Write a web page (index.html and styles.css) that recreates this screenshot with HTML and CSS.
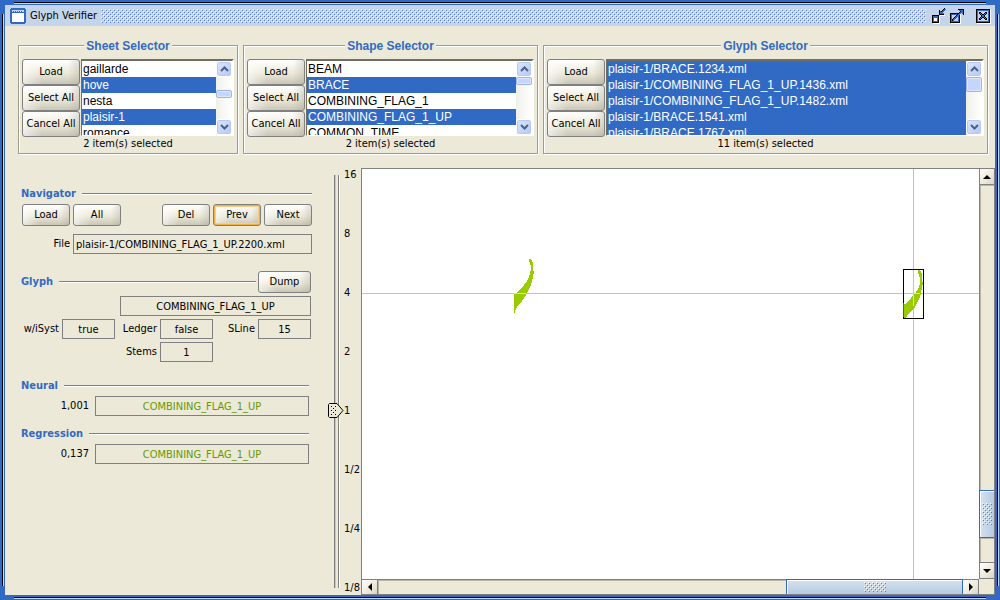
FILE: index.html
```html
<!DOCTYPE html>
<html lang="en">
<head>
<meta charset="utf-8">
<title>Glyph Verifier</title>
<link rel="stylesheet" href="styles.css">
</head>
<body>
<div class="window">
  <header class="titlebar">
    <svg class="app-icon" width="16" height="16" viewBox="0 0 16 16" shape-rendering="crispEdges" aria-hidden="true">
      <path fill="#316ac5" d="M1 0h14v1h1v14h-1v1H1v-1H0V1h1z"/>
      <path fill="#c4d5eb" d="M2 2h12v2H2z"/>
      <path fill="#fff" d="M2 5h12v9H2z"/>
      <path fill="#316ac5" d="M3 3h1v1H3zM5 3h1v1H5zM7 3h1v1H7zM9 3h1v1H9zM11 3h1v1h-1z"/>
    </svg>
    <h1 class="window-title">Glyph Verifier</h1>
    <div class="bumps titlebar-bumps"></div>
    <div class="window-buttons">
      <button class="icon-button" type="button" aria-label="Minimize">
        <svg width="16" height="16" viewBox="0 0 16 16" shape-rendering="crispEdges">
          <path fill="#fff" d="M2 8h7v8H2zM9 7h5v1H9z"/>
          <path fill="#000" d="M1 7h7v8H1z"/>
          <path fill="#316ac5" d="M2 8h5v6H2z"/>
          <path fill="#fff" d="M3 10h3v3H3z"/>
          <path fill="#000" d="M8 2h1v4h4v1H8zM13 0h1v1h-1zM12 1h1v1h-1zM11 2h1v1h-1zM10 3h1v1h-1z"/>
          <path fill="#316ac5" d="M13 1h2v1h-1v1h-1v1h-1v1h1v1H9V3h1v1h1V3h1V2h1z"/>
        </svg>
      </button>
      <button class="icon-button" type="button" aria-label="Maximize">
        <svg width="16" height="16" viewBox="0 0 16 16" shape-rendering="crispEdges">
          <path fill="#fff" d="M2 6h10v10H2z"/>
          <path fill="#000" d="M1 5h10v10H1z"/>
          <path fill="#316ac5" d="M2 6h8v8H2z"/>
          <path fill="#c4d5eb" d="M3 7h6v6H3z"/>
          <path fill="#000" d="M9 1h6v6h-1V2H9zM3 11h1v-1h1V9h1V8h1V7h1V6h1V5h1V4h1V3h1v2h-1v1h-1v1H9v1H8v1H7v1H6v1H5v1H4v1H3z"/>
          <path fill="#316ac5" d="M10 2h4v4h-1V5h-1v1h-1v1h-1v1H9v1H8v1H7v1H6v1H5v1H4v-2h1v-1h1V9h1V8h1V7h1V6h1V5h1V4h1V3h-2z"/>
        </svg>
      </button>
      <button class="icon-button close-button" type="button" aria-label="Close">
        <svg width="16" height="16" viewBox="0 0 16 16" shape-rendering="crispEdges">
          <path fill="#fff" d="M2 2h14v14H2z"/>
          <path fill="#000" d="M1 1h14v14H1z"/>
          <path fill="#316ac5" d="M2 2h12v12H2z"/>
          <path fill="#c4d5eb" d="M3 3h10v10H3z"/>
          <path fill="#000" d="M4 4h2v1h1v1h2V5h1V4h2v2h-1v1h-1v2h1v1h1v2h-2v-1H9v-1H7v1H6v1H4v-2h1V9h1V7H5V6H4z"/>
          <path fill="#316ac5" d="M5 5h1v1h1v1h2V6h1V5h1v1h-1v1H9v2h1v1h1v1h-1v-1H9V9H7v1H6v1H5v-1h1V9h1V7H6V6H5z"/>
        </svg>
      </button>
    </div>
  </header>

  <main class="content">
    <div class="selectors">
      <section class="selector">
        <h2 class="selector-title">Sheet Selector</h2>
        <div class="selector-body">
          <div class="selector-actions">
            <button class="button" type="button">Load</button>
            <button class="button" type="button">Select All</button>
            <button class="button" type="button">Cancel All</button>
          </div>
          <div class="list-frame">
            <select class="list" multiple aria-label="Sheets">
              <option>gaillarde</option>
              <option selected>hove</option>
              <option>nesta</option>
              <option selected>plaisir-1</option>
              <option>romance</option>
            </select>
            <div class="list-scroll">
              <button class="list-arrow" type="button" aria-label="Scroll up"><svg width="9" height="6" viewBox="0 0 9 6"><path d="M1 5l3.500-3.500L8 5" fill="none" stroke="#4d6185" stroke-width="2"/></svg></button>
              <span class="space-before"></span>
              <span class="list-thumb"></span>
              <span class="space-after"></span>
              <button class="list-arrow" type="button" aria-label="Scroll down"><svg width="9" height="6" viewBox="0 0 9 6"><path d="M1 1l3.500 3.500L8 1" fill="none" stroke="#4d6185" stroke-width="2"/></svg></button>
            </div>
          </div>
        </div>
        <p class="status">2 item(s) selected</p>
      </section>

      <section class="selector">
        <h2 class="selector-title">Shape Selector</h2>
        <div class="selector-body">
          <div class="selector-actions">
            <button class="button" type="button">Load</button>
            <button class="button" type="button">Select All</button>
            <button class="button" type="button">Cancel All</button>
          </div>
          <div class="list-frame">
            <select class="list" multiple aria-label="Shapes">
              <option>BEAM</option>
              <option selected>BRACE</option>
              <option>COMBINING_FLAG_1</option>
              <option selected>COMBINING_FLAG_1_UP</option>
              <option>COMMON_TIME</option>
            </select>
            <div class="list-scroll">
              <button class="list-arrow" type="button" aria-label="Scroll up"><svg width="9" height="6" viewBox="0 0 9 6"><path d="M1 5l3.500-3.500L8 5" fill="none" stroke="#4d6185" stroke-width="2"/></svg></button>
              <span class="list-thumb"></span>
              <span class="space-after"></span>
              <button class="list-arrow" type="button" aria-label="Scroll down"><svg width="9" height="6" viewBox="0 0 9 6"><path d="M1 1l3.500 3.500L8 1" fill="none" stroke="#4d6185" stroke-width="2"/></svg></button>
            </div>
          </div>
        </div>
        <p class="status">2 item(s) selected</p>
      </section>

      <section class="selector">
        <h2 class="selector-title">Glyph Selector</h2>
        <div class="selector-body">
          <div class="selector-actions">
            <button class="button" type="button">Load</button>
            <button class="button" type="button">Select All</button>
            <button class="button" type="button">Cancel All</button>
          </div>
          <div class="list-frame">
            <select class="list" multiple aria-label="Glyphs">
              <option selected>plaisir-1/BRACE.1234.xml</option>
              <option selected>plaisir-1/COMBINING_FLAG_1_UP.1436.xml</option>
              <option selected>plaisir-1/COMBINING_FLAG_1_UP.1482.xml</option>
              <option selected>plaisir-1/BRACE.1541.xml</option>
              <option selected>plaisir-1/BRACE.1767.xml</option>
            </select>
            <div class="list-scroll">
              <button class="list-arrow" type="button" aria-label="Scroll up"><svg width="9" height="6" viewBox="0 0 9 6"><path d="M1 5l3.500-3.500L8 5" fill="none" stroke="#4d6185" stroke-width="2"/></svg></button>
              <span class="list-thumb tall"></span>
              <span class="space-after"></span>
              <button class="list-arrow" type="button" aria-label="Scroll down"><svg width="9" height="6" viewBox="0 0 9 6"><path d="M1 1l3.500 3.500L8 1" fill="none" stroke="#4d6185" stroke-width="2"/></svg></button>
            </div>
          </div>
        </div>
        <p class="status">11 item(s) selected</p>
      </section>
    </div>

    <div class="workspace">
      <div class="boards">
        <section class="board">
          <div class="board-head"><h2 class="board-title">Navigator</h2><span class="rule"></span></div>
          <div class="nav-buttons">
            <button class="button small" type="button">Load</button>
            <button class="button small" type="button">All</button>
            <span class="spacer"></span>
            <button class="button small" type="button">Del</button>
            <button class="button small focused" type="button">Prev</button>
            <button class="button small" type="button">Next</button>
          </div>
          <div class="file-row">
            <label for="file">File</label>
            <input class="field left" id="file" type="text" readonly value="plaisir-1/COMBINING_FLAG_1_UP.2200.xml">
          </div>
        </section>

        <section class="board glyph-board">
          <div class="board-head"><h2 class="board-title">Glyph</h2><span class="rule"></span><button class="button dump" type="button">Dump</button></div>
          <div class="glyph-grid">
            <div class="shape-cell"><input class="field" type="text" readonly aria-label="Shape" value="COMBINING_FLAG_1_UP"></div>
            <label for="syst">w/iSyst</label><input class="field" id="syst" type="text" readonly value="true">
            <label for="ledger">Ledger</label><input class="field" id="ledger" type="text" readonly value="false">
            <label for="sline">SLine</label><input class="field" id="sline" type="text" readonly value="15">
            <label class="stems-label" for="stems">Stems</label><input class="field" id="stems" type="text" readonly value="1">
          </div>
        </section>

        <section class="board result-board">
          <div class="board-head"><h2 class="board-title">Neural</h2><span class="rule"></span></div>
          <div class="result-row">
            <label for="neural">1,001</label>
            <input class="field result" id="neural" type="text" readonly value="COMBINING_FLAG_1_UP">
          </div>
        </section>

        <section class="board result-board">
          <div class="board-head"><h2 class="board-title">Regression</h2><span class="rule"></span></div>
          <div class="result-row">
            <label for="regression">0,137</label>
            <input class="field result" id="regression" type="text" readonly value="COMBINING_FLAG_1_UP">
          </div>
        </section>
      </div>

      <div class="zoom">
        <input class="zoom-slider" type="range" min="-3" max="4" value="0" aria-label="Zoom">
        <ol class="zoom-labels">
          <li>16</li><li>8</li><li>4</li><li>2</li><li>1</li><li>1/2</li><li>1/4</li><li>1/8</li>
        </ol>
      </div>

      <div class="viewer">
        <svg class="sheet" shape-rendering="crispEdges" role="img" aria-label="Glyph view">
          <path d="M0 124.500H2000M551.500 0V2000" stroke="#ffc800" fill="none"/>
          <path fill="#99cc00" d="M167 90h2v1h1v2h1v9h1v3h-1v5h-1v4h-1v3h-1v2h-1v2h-1v2h-1v2h-1v2h-1v1h-1v2h-1v1h-1v2h-1v1h-1v1h-1v1h-1v1h-1v2h-1v2h-1v3h-1v-19h1v-1h2v-1h1v-1h1v-1h1v-1h1v-1h1v-1h1v-1h1v-2h1v-1h1v-1h1v-2h1v-2h1v-3h1v-4h1v-6h-1z"/>
          <path fill="#99cc00" d="M556 101h2v1h1v2h1v9h1v3h-1v5h-1v5h-1v3h-1v2h-1v2h-1v2h-1v2h-1v2h-1v1h-1v1h-1v1h-1v1h-1v1h-1v1h-1v1h-1v2h-1v1h-1v1h-2v-14h1v-1h2v-1h1v-1h1v-1h1v-1h1v-1h1v-2h1v-1h1v-1h1v-1h1v-1h1v-2h1v-1h1v-2h1v-3h1v-8h-1z"/>
          <path d="M152 124.500h12M552 124.500h6M551.500 126v11" stroke="#99ffcc" fill="none"/>
          <path d="M541.500 100.500h20v49h-20z" stroke="#000" fill="none"/>
          <path d="M541.500 134v14" stroke="#6633ff" fill="none"/>
        </svg>
        <div class="bar vertical">
          <button class="bar-arrow" type="button" aria-label="Scroll up"><svg width="8" height="4" viewBox="0 0 8 4"><path d="M0 4L4 0l4 4z"/></svg></button>
          <span class="track before"></span>
          <span class="bar-thumb"><span class="bumps"></span></span>
          <span class="track after"></span>
          <button class="bar-arrow" type="button" aria-label="Scroll down"><svg width="8" height="4" viewBox="0 0 8 4"><path d="M0 0l4 4 4-4z"/></svg></button>
        </div>
        <div class="bar horizontal">
          <button class="bar-arrow" type="button" aria-label="Scroll left"><svg width="4" height="8" viewBox="0 0 4 8"><path d="M4 0L0 4l4 4z"/></svg></button>
          <span class="track before"></span>
          <span class="bar-thumb"><span class="bumps"></span></span>
          <button class="bar-arrow" type="button" aria-label="Scroll right"><svg width="4" height="8" viewBox="0 0 4 8"><path d="M0 0l4 4-4 4z"/></svg></button>
        </div>
        <div class="corner"></div>
      </div>
    </div>
  </main>
</div>
</body>
</html>
```

FILE: styles.css
```css
:root {
  --blue: #316ac5;
  --light-blue: #c4d5eb;
  --face: #ece9d8;
  --gray: #808080;
  --etch: #9d9d8c;
}

* {
  box-sizing: border-box;
}

body {
  margin: 0;
  background: var(--blue);
  color: #000;
  font: 11px/14px "DejaVu Sans Condensed", "DejaVu Sans", sans-serif;
}

h1, h2, p, ol {
  margin: 0;
  padding: 0;
}

button, input, select {
  font: inherit;
  color: inherit;
  border-radius: 0;
}

/* Window frame: blue edge with a black and light hairline on each side */
.window {
  display: flex;
  flex-direction: column;
  height: 100vh;
  min-height: 500px;
  padding: 5px;
  background:
    linear-gradient(#000, #000) center 2px / calc(100% - 28px) 1px no-repeat,
    linear-gradient(var(--light-blue), var(--light-blue)) center 3px / calc(100% - 28px) 1px no-repeat,
    linear-gradient(#000, #000) center bottom 2px / calc(100% - 28px) 1px no-repeat,
    linear-gradient(var(--light-blue), var(--light-blue)) center bottom 1px / calc(100% - 28px) 1px no-repeat,
    linear-gradient(#000, #000) 2px center / 1px calc(100% - 28px) no-repeat,
    linear-gradient(var(--light-blue), var(--light-blue)) 3px center / 1px calc(100% - 28px) no-repeat,
    linear-gradient(#000, #000) right 2px center / 1px calc(100% - 28px) no-repeat,
    linear-gradient(var(--light-blue), var(--light-blue)) right 1px center / 1px calc(100% - 28px) no-repeat,
    var(--blue);
}

.titlebar {
  display: flex;
  flex: none;
  align-items: center;
  height: 21px;
  padding: 0 4px 0 5px;
  background: var(--light-blue);
}

.window-title {
  margin: 0 4px;
  font-size: 11px;
  font-weight: normal;
}

.bumps {
  background: url("data:image/svg+xml,%3Csvg xmlns='http://www.w3.org/2000/svg' width='4' height='4' shape-rendering='crispEdges'%3E%3Cpath fill='%23fff' d='M0 0h1v1H0zM2 2h1v1H2z'/%3E%3Cpath fill='%235b80bb' d='M1 1h1v1H1zM3 3h1v1H3z'/%3E%3C/svg%3E");
}

.titlebar-bumps {
  flex: 1;
  height: 14px;
}

.window-buttons {
  display: flex;
  gap: 2px;
  margin-left: 5px;
}

.icon-button {
  display: flex;
  padding: 0;
  border: 0;
  background: none;
}

.close-button {
  margin-left: 8px;
}

.content {
  display: flex;
  flex: 1;
  flex-direction: column;
  gap: 14px;
  min-height: 0;
  padding-top: 19px;
  background: var(--face);
}

/* Selector panels */
.selectors {
  display: grid;
  flex: none;
  grid-template-columns: 220fr 295fr 445fr;
  gap: 5px;
  padding: 0 7px 0 13px;
}

.selector {
  min-width: 0;
  padding: 0 3px 2px;
  border: 1px solid var(--etch);
  box-shadow: 1px 1px 0 #fff, inset 1px 1px 0 #fff;
  text-align: center;
}

.selector-title {
  width: fit-content;
  margin: -7px auto 6px;
  padding: 0 2px;
  background: var(--face);
  color: var(--blue);
  font: bold 12px/14px "Liberation Sans", Arial, sans-serif;
}

.selector-body {
  display: flex;
  gap: 1px;
}

.selector-actions {
  flex: none;
  width: 58px;
}

.selector-actions .button {
  display: block;
  width: 100%;
  height: 26px;
}

.button {
  flex: none;
  padding: 0;
  border: 1px solid var(--gray);
  border-radius: 3px;
  background: linear-gradient(90deg, #fff9 0, #fff0 35%, #fff0 80%, #a8a59855 100%),
    linear-gradient(#fff 0, #ece9d8 55%, #c9c6b8 100%);
  white-space: nowrap;
}

.small {
  width: 48px;
  height: 22px;
}

.focused {
  box-shadow: inset 0 0 0 1px #f0b040, inset 0 0 0 2px #f8cf80;
}

.list-frame {
  display: flex;
  flex: 1;
  min-width: 0;
  height: 77px;
  border: 1px solid;
  border-width: 2px 2px 1px 1px;
  border-color: #716f64 #fff #fff #716f64;
  background: #fff;
}

.list {
  flex: 1;
  min-width: 0;
  height: 74px;
  padding: 0;
  overflow: hidden;
  border: 0;
  outline: 0;
  background: #fff;
  font: 12px/16px "Liberation Sans", Arial, sans-serif;
  scrollbar-width: none;
}

.list option {
  height: 16px;
  min-height: 16px;
  padding: 1px 1px 0;
  line-height: 16px;
}

.list option:checked {
  background: linear-gradient(var(--blue), var(--blue));
  -webkit-text-fill-color: #fff;
}

.list-scroll {
  display: flex;
  flex: none;
  flex-direction: column;
  width: 16px;
  background: linear-gradient(90deg, #f0f0ea, #fff);
}

.list-arrow {
  display: flex;
  flex: none;
  align-items: center;
  justify-content: center;
  height: 16px;
  padding: 0;
  border: 1px solid #fff;
  border-radius: 3px;
  background: linear-gradient(135deg, #dbe6ff, #b4c8f6);
  box-shadow: inset 0 0 0 1px #b8c9f0;
}

.list-thumb {
  flex: none;
  height: 8px;
  border: 1px solid #9fb5e3;
  border-radius: 2px;
  background: #c6d5fb;
  box-shadow: inset 0 0 0 1px #dbe6ff;
}

.tall {
  height: 15px;
}

.space-before {
  flex: 13;
}

.space-after {
  flex: 20;
}

/* Lower area */
.workspace {
  display: grid;
  flex: 1;
  grid-template-rows: minmax(0, 1fr);
  grid-template-columns: 291px 27px minmax(0, 1fr);
  column-gap: 17px;
  min-height: 0;
  padding-left: 16px;
}

.boards {
  padding-top: 18px;
}

.board {
  margin-bottom: 17px;
}

.board-head {
  display: flex;
  align-items: center;
}

.board-title {
  color: var(--blue);
  font-size: 11px;
  line-height: 16px;
}

.rule {
  flex: 1;
  height: 2px;
  margin-left: 6px;
  border-top: 1px solid var(--gray);
  background: #fff;
}

.nav-buttons {
  display: flex;
  gap: 3px;
  margin: 2px 0 8px;
  padding-left: 1px;
}

.spacer {
  flex: 1;
}

.file-row {
  display: grid;
  grid-template-columns: 49px 1fr;
  gap: 3px;
  align-items: center;
  text-align: right;
}

.field {
  display: block;
  width: 100%;
  min-width: 0;
  height: 20px;
  padding: 0 2px;
  border: 1px solid var(--gray);
  background: var(--face);
  text-align: center;
}

.left {
  text-align: left;
}

.glyph-board {
  margin-bottom: 16px;
  padding-right: 1px;
}

.dump {
  width: 53px;
  height: 22px;
  margin-left: 2px;
}

.glyph-grid {
  display: grid;
  grid-template-columns: 38px 53px 39px 53px 39px 1fr;
  gap: 3px;
  align-items: center;
  margin-top: 3px;
  text-align: right;
}

.shape-cell {
  grid-column: 3 / 7;
  padding-left: 2px;
}

.stems-label {
  grid-column: 3;
}

.result-board {
  margin-bottom: 10px;
  padding-right: 3px;
}

.result-row {
  display: grid;
  grid-template-columns: 68px 1fr;
  gap: 6px;
  align-items: center;
  margin-top: 2px;
  text-align: right;
}

.result {
  color: #669900;
}

/* Zoom slider */
.zoom {
  display: flex;
  min-height: 0;
}

.zoom-slider {
  flex: none;
  width: 16px;
  height: 100%;
  margin: 0 0 0 -1px;
  appearance: none;
  writing-mode: vertical-lr;
  direction: rtl;
  background: linear-gradient(90deg, var(--gray) 1px, #c9c6b8 1px 2px, var(--face) 2px 4px, var(--gray) 4px 5px, #fff 5px) 6px center / 6px calc(100% - 14px) no-repeat;
}

.zoom-slider::-webkit-slider-thumb {
  width: 16px;
  height: 15px;
  appearance: none;
  background: url("data:image/svg+xml,%3Csvg xmlns='http://www.w3.org/2000/svg' width='16' height='15'%3E%3Cpath d='M1.500.5H9L15 7.500 9 14.500H1.500L.5 13.500V1.500z' fill='%23ece9d8' stroke='%23000'/%3E%3Cpath d='M3 3h1v1H3zM7 3h1v1H7zM5 5h1v1H5zM3 7h1v1H3zM7 7h1v1H7zM5 9h1v1H5zM3 11h1v1H3zM7 11h1v1H7z'/%3E%3C/svg%3E");
}

.zoom-labels {
  display: flex;
  flex-direction: column;
  justify-content: space-between;
  list-style: none;
}

/* Sheet view with scroll bars */
.viewer {
  display: grid;
  grid-template-columns: minmax(0, 1fr) 16px;
  grid-template-rows: minmax(0, 1fr) 16px;
  margin-left: -12px;
  border: 1px solid var(--gray);
  border-width: 1px 0 0 1px;
  background: #fff;
}

.sheet {
  width: 100%;
  height: 100%;
}

.bar {
  display: flex;
  border: 1px solid var(--gray);
  background: var(--face);
}

.vertical {
  flex-direction: column;
  border-width: 0 1px 0 1px;
}

.horizontal {
  border-width: 1px 0 1px 0;
}

.bar-arrow {
  display: flex;
  flex: none;
  align-items: center;
  justify-content: center;
  padding: 0;
  border: 0 solid var(--gray);
  background: linear-gradient(135deg, #fff, #ece9d8 60%, #d8d5c6);
}

.vertical .bar-arrow {
  height: 16px;
  border-width: 0 0 1px;
}

.horizontal .bar-arrow {
  width: 16px;
  border-width: 0 1px 0 0;
}

.track {
  box-shadow: inset 1px 1px 0 #b9b6a8;
}

.vertical .before {
  flex: 306;
}

.vertical .after {
  flex: 24;
  border-bottom: 1px solid var(--gray);
}

.horizontal .before {
  flex: 1;
}

.bar-thumb {
  display: flex;
  flex: none;
  align-items: center;
  justify-content: center;
  border: 1px solid var(--blue);
  box-shadow: inset 1px 1px 0 #fff;
}

.vertical .bar-thumb {
  height: 48px;
  margin-left: -1px;
  border-right: 0;
  background: linear-gradient(90deg, #d5e2f0, #b4c9e2);
}

.horizontal .bar-thumb {
  width: 177px;
  margin-top: -1px;
  border-bottom: 0;
  background: linear-gradient(#d5e2f0, #b4c9e2);
}

.vertical .bumps {
  width: 10px;
  height: 22px;
}

.horizontal .bumps {
  width: 22px;
  height: 10px;
}

.corner {
  border: 1px solid var(--gray);
  border-width: 0 1px 1px 0;
  background: var(--face);
}
```
